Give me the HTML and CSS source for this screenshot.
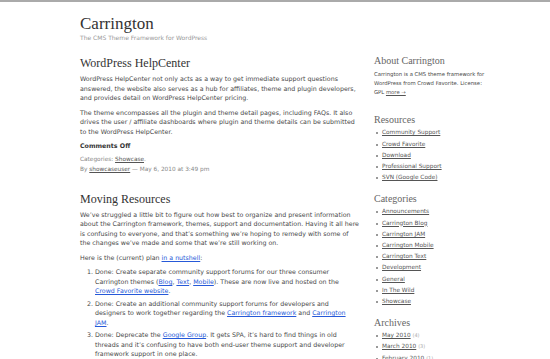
FILE: index.html
```html
<!DOCTYPE html>
<html>
<head>
<meta charset="utf-8">
<link rel="stylesheet" href="styles.css">
</head>
<body>
<div class="page">
  <header class="header">
    <h1 class="site-title">Carrington</h1>
    <p class="tagline">The CMS Theme Framework for WordPress</p>
  </header>
  <div class="columns">
    <main class="content">
      <article class="post">
        <h2 class="post-title">WordPress HelpCenter</h2>
        <p>WordPress HelpCenter not only acts as a way to get immediate support questions answered, the website also serves as a hub for affiliates, theme and plugin developers, and provides detail on WordPress HelpCenter pricing.</p>
        <p>The theme encompasses all the plugin and theme detail pages, including FAQs. It also drives the user / affiliate dashboards where plugin and theme details can be submitted to the WordPress HelpCenter.</p>
        <p class="comments">Comments Off</p>
        <p class="meta">Categories: <a href="#">Showcase</a>.<br>By <a href="#">showcaseuser</a> — May 6, 2010 at 3:49 pm</p>
      </article>
      <article class="post">
        <h2 class="post-title">Moving Resources</h2>
        <p>We’ve struggled a little bit to figure out how best to organize and present information about the Carrington framework, themes, support and documentation. Having it all here is confusing to everyone, and that’s something we’re hoping to remedy with some of the changes we’ve made and some that we’re still working on.</p>
        <p>Here is the (current) plan <a class="blue" href="#">in a nutshell</a>:</p>
        <ol class="plan">
          <li>Done: Create separate community support forums for our three consumer Carrington themes (<a class="blue" href="#">Blog</a>, <a class="blue" href="#">Text</a>, <a class="blue" href="#">Mobile</a>). These are now live and hosted on the <a class="blue" href="#">Crowd Favorite website</a>.</li>
          <li>Done: Create an additional community support forums for developers and designers to work together regarding the <a class="blue" href="#">Carrington framework</a> and <a class="blue" href="#">Carrington JAM</a>.</li>
          <li>Done: Deprecate the <a class="blue" href="#">Google Group</a>. It gets SPA, it’s hard to find things in old threads and it’s confusing to have both end-user theme support and developer framework support in one place.</li>
        </ol>
      </article>
    </main>
    <aside class="sidebar">
      <section class="widget widget-about">
        <h3 class="widget-title">About Carrington</h3>
        <p class="about">Carrington is a CMS theme framework for WordPress from Crowd Favorite. License: GPL <a href="#">more →</a></p>
      </section>
      <section class="widget">
        <h3 class="widget-title">Resources</h3>
        <ul class="links">
          <li><a href="#">Community Support</a></li>
          <li><a href="#">Crowd Favorite</a></li>
          <li><a href="#">Download</a></li>
          <li><a href="#">Professional Support</a></li>
          <li><a href="#">SVN (Google Code)</a></li>
        </ul>
      </section>
      <section class="widget">
        <h3 class="widget-title">Categories</h3>
        <ul class="links">
          <li><a href="#">Announcements</a></li>
          <li><a href="#">Carrington Blog</a></li>
          <li><a href="#">Carrington JAM</a></li>
          <li><a href="#">Carrington Mobile</a></li>
          <li><a href="#">Carrington Text</a></li>
          <li><a href="#">Development</a></li>
          <li><a href="#">General</a></li>
          <li><a href="#">In The Wild</a></li>
          <li><a href="#">Showcase</a></li>
        </ul>
      </section>
      <section class="widget">
        <h3 class="widget-title">Archives</h3>
        <ul class="links">
          <li><a href="#">May 2010</a> <span class="count">(4)</span></li>
          <li><a href="#">March 2010</a> <span class="count">(3)</span></li>
          <li><a href="#">February 2010</a> <span class="count">(1)</span></li>
        </ul>
      </section>
    </aside>
  </div>
</div>
</body>
</html>
```
FILE: styles.css
```css
html, body {
  margin: 0;
  padding: 0;
  background: #fff;
}
body {
  border-top: 2px solid #aaa;
  font-family: "DejaVu Sans", sans-serif;
  font-size: 6.3px;
  line-height: 9.5px;
  color: #484848;
  overflow: hidden;
}
.page {
  padding: 13px 0 0 80px;
}
.header {
  margin-bottom: 13px;
}
.site-title {
  font-family: "Liberation Serif", serif;
  font-weight: normal;
  font-size: 17px;
  line-height: 18px;
  color: #333;
  margin: 0;
}
.tagline {
  margin: 0;
  color: #999;
  font-size: 6px;
  line-height: 9px;
}
.columns {
  display: flex;
  gap: 14px;
  align-items: flex-start;
}
.content {
  width: 280px;
}
.sidebar {
  width: 116px;
}
.post {
  margin-bottom: 16.5px;
}
.post-title {
  font-family: "Liberation Serif", serif;
  font-weight: normal;
  font-size: 12px;
  line-height: 16px;
  color: #333;
  margin: 0 0 3px;
}
.post p {
  margin: 0 0 5px;
}
.post p.comments {
  font-weight: bold;
  color: #333;
  margin: 4.5px 0 4.8px;
}
.meta {
  color: #888;
  font-size: 5.8px;
  line-height: 9.5px;
}
.meta a, .sidebar a {
  color: #555;
  text-decoration: underline;
}
a.blue {
  color: #2659d8;
}
.post .plan {
  margin: 5.2px 7px 0 0;
  padding-left: 15px;
}
.plan li {
  margin-bottom: 2.8px;
}
.widget {
  margin-bottom: 9.6px;
}
.widget-about {
  margin-bottom: 17.5px;
}
.widget-title {
  font-family: "Liberation Serif", serif;
  font-weight: normal;
  font-size: 10px;
  line-height: 12px;
  color: #666;
  margin: 0 0 1.4px;
}
.widget-about .widget-title {
  margin-bottom: 2.5px;
}
.about {
  margin: 0;
  line-height: 9px;
  font-size: 5.3px;
}
.links {
  list-style: none;
  margin: 0;
  padding: 0;
  font-size: 5.8px;
}
.links li {
  position: relative;
  padding-left: 8px;
  line-height: 11.2px;
}
.links li::before {
  content: "";
  position: absolute;
  left: 1.5px;
  top: 5px;
  width: 2px;
  height: 2px;
  background: #999;
}
.count {
  color: #aaa;
  font-size: 5px;
}
```
